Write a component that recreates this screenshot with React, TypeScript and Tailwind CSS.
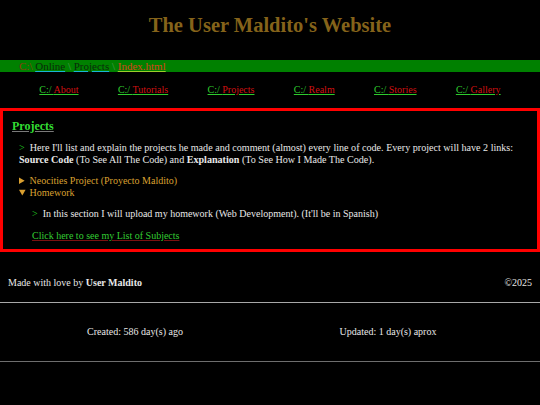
const navItems = ['About', 'Tutorials', 'Projects', 'Realm', 'Stories', 'Gallery'];

export default function App() {
  return (
    <div className="min-h-screen bg-black text-[#e8e8e8] font-[family-name:Liberation_Serif,Times_New_Roman,serif] text-[10px] leading-[12px]">
      {/* header */}
      <h1 className="pt-[13px] text-center text-[20.5px] leading-[24px] font-bold text-[#85631a]">
        The User Maldito's Website
      </h1>

      {/* breadcrumb */}
      <div className="mt-[23px] h-[12px] bg-[#008000] pl-[19px] text-[11px] leading-[12px] text-[#0a2a0a]">
        <span className="text-[#8b3a12]">C:\</span>{' '}
        <a href="#" className="underline decoration-[#19b4d4]">Online</a>{' '}
        <span className="text-[#4f9a4f]">\</span>{' '}
        <a href="#" className="underline decoration-[#19b4d4]">Projects</a>{' '}
        <span className="text-[#4f9a4f]">\</span>{' '}
        <a href="#" className="text-[#d2461c] underline decoration-[#9ccc2a]">Index.html</a>
      </div>

      {/* nav */}
      <nav className="mt-[11px] flex justify-evenly leading-[14px]">
        {navItems.map((item) => (
          <a key={item} href="#" className="text-[#2ecc2e] underline decoration-[#2ecc2e]">
            C:/ <span className="text-[#d01010]">{item}</span>
          </a>
        ))}
      </nav>

      {/* projects box */}
      <section className="mt-[11px] border-[3px] border-[#ff0000] px-[9px] pt-[7px] pb-[7px]">
        <h2 className="text-[12px] leading-[16px] font-bold text-[#33dd33] underline decoration-[#7a7a7a]">
          Projects
        </h2>
        <p className="mt-[8px] ml-[7px] text-[10.1px]">
          <span className="text-[#22cc22]">&gt;</span>&nbsp; Here I'll list and explain the projects he made and comment
          (almost) every line of code. Every project will have 2 links: <b>Source Code</b> (To See All The Code) and{' '}
          <b>Explanation</b> (To See How I Made The Code).
        </p>

        <div className="mt-[9px] ml-[7px] text-[#daa030]">
          <details>
            <summary className="cursor-pointer">Neocities Project (Proyecto Maldito)</summary>
            <p className="ml-[13px] mt-[9px] text-[#e8e8e8]">Coming soon.</p>
          </details>
          <details open>
            <summary className="cursor-pointer">Homework</summary>
            <p className="ml-[13px] mt-[9px] text-[#e8e8e8]">
              <span className="text-[#22cc22]">&gt;</span>&nbsp; In this section I will upload my homework (Web
              Development). (It'll be in Spanish)
            </p>
            <a href="#" className="mt-[10px] ml-[13px] block w-fit text-[#33cc33] underline decoration-[#7a1010]">
              Click here to see my List of Subjects
            </a>
          </details>
        </div>
      </section>

      {/* footer */}
      <footer className="mt-[25px]">
        <div className="flex justify-between px-2">
          <span>
            Made with love by <b>User Maldito</b>
          </span>
          <span>©2025</span>
        </div>
        <div className="mt-[13px] flex h-[60px] items-center border-t border-b border-t-[#a8a8a8] border-b-[#6e6e6e]">
          <div className="w-[270px] text-center">Created: 586 day(s) ago</div>
          <div className="flex-1 pr-[34px] text-center">Updated: 1 day(s) aprox</div>
        </div>
      </footer>
    </div>
  );
}
